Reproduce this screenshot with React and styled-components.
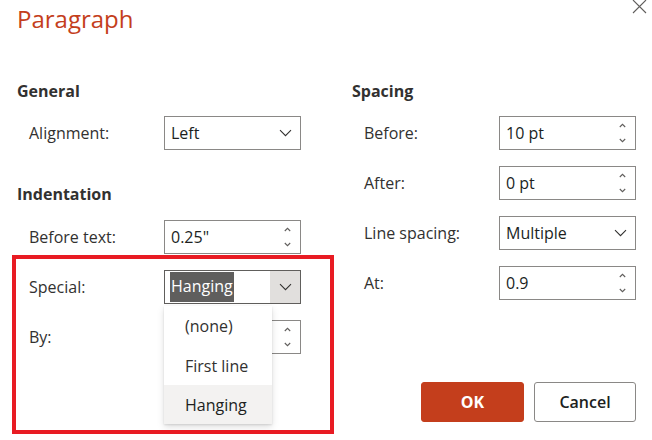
import React from 'react';
import styled, { createGlobalStyle } from 'styled-components';

const GlobalStyle = createGlobalStyle`
  html, body {
    margin: 0;
    padding: 0;
    background: #ffffff;
  }
  body {
    font-family: "Segoe UI", "Open Sans", "Noto Sans", sans-serif;
    color: #323130;
  }
  * { box-sizing: border-box; }
`;

const Dialog = styled.div`
  position: relative;
  width: 652px;
  height: 440px;
  padding: 0 16px 0 17px;
  overflow: hidden;
  background: #ffffff;
`;

const TitleBar = styled.div`
  display: flex;
  justify-content: space-between;
  align-items: flex-start;
  height: 81px;
`;

const Title = styled.h1`
  margin: 0;
  padding-top: 1px;
  font-size: 24px;
  line-height: 36px;
  font-weight: 400;
  color: #c43e1c;
`;

const CloseButton = styled.div`
  margin-top: -2px;
  margin-right: -11px;
  width: 16px;
  height: 16px;
  display: flex;
  align-items: center;
  justify-content: center;
  color: #605e5c;
`;

const Columns = styled.div`
  display: grid;
  grid-template-columns: 284px 284px;
  column-gap: 51px;
`;

const Column = styled.div`
  display: flex;
  flex-direction: column;
`;

const Heading = styled.div`
  height: 20px;
  line-height: 20px;
  font-size: 16px;
  font-weight: 700;
  color: #323130;
  margin-top: ${({ $first }) => ($first ? '0' : '34px')};
  margin-bottom: ${({ $first }) => ($first ? '15px' : '16px')};
`;

const Rows = styled.div`
  display: flex;
  flex-direction: column;
  gap: 16px;
`;

const Row = styled.div`
  display: flex;
  align-items: center;
  height: 34px;
  padding-left: ${({ $indent }) => $indent}px;
`;

const Label = styled.div`
  width: ${({ $width }) => $width}px;
  font-size: 16px;
  color: #323130;
  white-space: nowrap;
`;

const Field = styled.div`
  position: relative;
  display: flex;
  align-items: center;
  width: 137px;
  height: 34px;
  border: 1px solid ${({ $focused }) => ($focused ? '#605e5c' : '#8a8886')};
  background: #ffffff;
  font-size: 16px;
  color: #201f1e;
`;

const Value = styled.div`
  flex: 1;
  padding-left: 6px;
  white-space: nowrap;
`;

const Highlight = styled.span`
  display: inline-block;
  margin-left: -1px;
  padding: 0 1px;
  height: 30px;
  line-height: 29px;
  background: #5f5e5d;
  color: #ffffff;
`;

const ChevronBox = styled.div`
  width: 30px;
  height: 100%;
  display: flex;
  align-items: center;
  justify-content: center;
  background: ${({ $active }) => ($active ? '#e1dfdd' : 'transparent')};
`;

const Spinner = styled.div`
  width: 22px;
  height: 100%;
  display: flex;
  flex-direction: column;
  align-items: center;
  justify-content: space-between;
  padding: 6px 0 6px;
  padding-right: 4px;
`;

const Menu = styled.div`
  position: absolute;
  top: 35px;
  left: -1px;
  width: 108px;
  background: #ffffff;
  box-shadow: 0 3.2px 7.2px rgba(0, 0, 0, 0.13), 0 0.6px 1.8px rgba(0, 0, 0, 0.11);
  z-index: 5;
`;

const MenuItem = styled.div`
  height: ${({ $h }) => $h}px;
  display: flex;
  align-items: center;
  padding-left: 21px;
  font-size: 16px;
  color: ${({ $selected }) => ($selected ? '#201f1e' : '#323130')};
  background: ${({ $selected }) => ($selected ? '#f3f2f1' : '#ffffff')};
`;

const Footer = styled.div`
  display: flex;
  justify-content: flex-end;
  gap: 10px;
  margin-top: 28px;
`;

const Button = styled.button`
  height: 40px;
  width: ${({ $w }) => $w}px;
  border-radius: 3px;
  font-family: inherit;
  font-size: 16px;
  font-weight: ${({ $primary }) => ($primary ? 700 : 600)};
  border: 1px solid ${({ $primary }) => ($primary ? '#c43e1c' : '#8a8886')};
  background: ${({ $primary }) => ($primary ? '#c43e1c' : '#ffffff')};
  color: ${({ $primary }) => ($primary ? '#ffffff' : '#201f1e')};
  padding: 0;
`;

const Annotation = styled.div`
  position: absolute;
  left: 12px;
  top: 255px;
  width: 322px;
  height: 179px;
  border: 4px solid #e81b23;
  pointer-events: none;
  z-index: 10;
`;

const Chevron = () => (
  <svg width="13" height="8" viewBox="0 0 13 8">
    <path d="M1 1.2l5.5 5.5 5.5-5.5" fill="none" stroke="#323130" strokeWidth="1.1" />
  </svg>
);

const Caret = ({ up }) => (
  <svg width="7" height="5" viewBox="0 0 7 5">
    <path d={up ? 'M0.8 4l2.7-2.7 2.7 2.7' : 'M0.8 1l2.7 2.7 2.7-2.7'} fill="none" stroke="#605e5c" strokeWidth="1.1" />
  </svg>
);

const SelectField = ({ value }) => (
  <Field>
    <Value>{value}</Value>
    <ChevronBox>
      <Chevron />
    </ChevronBox>
  </Field>
);

const SpinField = ({ value }) => (
  <Field>
    <Value>{value}</Value>
    <Spinner>
      <Caret up />
      <Caret />
    </Spinner>
  </Field>
);

const specialOptions = ['(none)', 'First line', 'Hanging'];
const optionHeights = [40, 39, 39];

export default function App() {
  return (
    <>
      <GlobalStyle />
      <Dialog>
        <TitleBar>
          <Title>Paragraph</Title>
          <CloseButton>
            <svg width="15" height="15" viewBox="0 0 15 15">
              <path d="M1 1l13 13M14 1L1 14" stroke="#605e5c" strokeWidth="1.1" fill="none" />
            </svg>
          </CloseButton>
        </TitleBar>

        <Columns>
          <Column>
            <Heading $first>General</Heading>
            <Rows>
              <Row $indent={12}>
                <Label $width={135}>Alignment:</Label>
                <SelectField value="Left" />
              </Row>
            </Rows>

            <Heading>Indentation</Heading>
            <Rows>
              <Row $indent={12}>
                <Label $width={135}>Before text:</Label>
                <SpinField value={'0.25"'} />
              </Row>
              <Row $indent={12}>
                <Label $width={135}>Special:</Label>
                <Field $focused>
                  <Value>
                    <Highlight>Hanging</Highlight>
                  </Value>
                  <ChevronBox $active>
                    <Chevron />
                  </ChevronBox>
                  <Menu>
                    {specialOptions.map((opt, i) => (
                      <MenuItem key={opt} $h={optionHeights[i]} $selected={opt === 'Hanging'}>
                        {opt}
                      </MenuItem>
                    ))}
                  </Menu>
                </Field>
              </Row>
              <Row $indent={12}>
                <Label $width={135}>By:</Label>
                <SpinField value="" />
              </Row>
            </Rows>
          </Column>

          <Column>
            <Heading $first>Spacing</Heading>
            <Rows>
              <Row $indent={12}>
                <Label $width={135}>Before:</Label>
                <SpinField value="10 pt" />
              </Row>
              <Row $indent={12}>
                <Label $width={135}>After:</Label>
                <SpinField value="0 pt" />
              </Row>
              <Row $indent={12}>
                <Label $width={135}>Line spacing:</Label>
                <SelectField value="Multiple" />
              </Row>
              <Row $indent={12}>
                <Label $width={135}>At:</Label>
                <SpinField value="0.9" />
              </Row>
            </Rows>
          </Column>
        </Columns>

        <Footer>
          <Button $primary $w={103}>OK</Button>
          <Button $w={102}>Cancel</Button>
        </Footer>

        <Annotation />
      </Dialog>
    </>
  );
}
